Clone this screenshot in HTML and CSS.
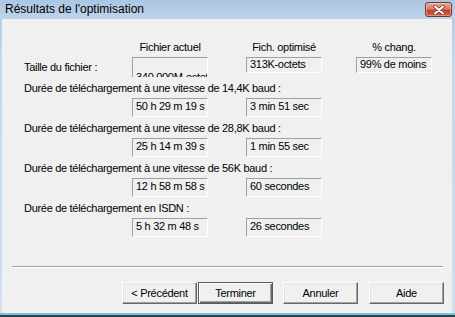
FILE: index.html
```html
<!DOCTYPE html>
<html lang="fr">
<head>
    <meta charset="UTF-8">
    <title>Résultats de l'optimisation</title>
    <link rel="stylesheet" href="styles.css">
</head>
<body>
    <div class="window">
        <div class="titlebar">
            <span class="title">Résultats de l'optimisation</span>
            <span class="close">
                <svg width="12" height="10" viewBox="0 0 12 10">
                    <path d="M2 1.5 L10 8.5 M10 1.5 L2 8.5" stroke="#7a3a30" stroke-width="3.6" stroke-linecap="round"/>
                    <path d="M2 1.5 L10 8.5 M10 1.5 L2 8.5" stroke="#ffffff" stroke-width="2" stroke-linecap="round"/>
                </svg>
            </span>
        </div>

        <div class="content">
            <div class="results">
                <div class="row head">
                    <div class="cell-label"></div>
                    <div class="c1">Fichier actuel</div>
                    <div class="c2">Fich. optimisé</div>
                    <div class="c3">% chang.</div>
                </div>

                <div class="row size">
                    <div class="cell-label">Taille du fichier :</div>
                    <div class="c1 box clipped">340 000M-octets</div>
                    <div class="c2 box short">313K-octets</div>
                    <div class="c3 box short">99% de moins</div>
                </div>

                <div class="group">
                    <div class="label">Durée de téléchargement à une vitesse de 14,4K baud :</div>
                    <div class="row">
                        <div class="cell-label"></div>
                        <div class="c1 box">50 h 29 m 19 s</div>
                        <div class="c2 box">3 min 51 sec</div>
                    </div>
                </div>

                <div class="group">
                    <div class="label">Durée de téléchargement à une vitesse de 28,8K baud :</div>
                    <div class="row">
                        <div class="cell-label"></div>
                        <div class="c1 box">25 h 14 m 39 s</div>
                        <div class="c2 box">1 min 55 sec</div>
                    </div>
                </div>

                <div class="group">
                    <div class="label">Durée de téléchargement à une vitesse de 56K baud :</div>
                    <div class="row">
                        <div class="cell-label"></div>
                        <div class="c1 box">12 h 58 m 58 s</div>
                        <div class="c2 box">60 secondes</div>
                    </div>
                </div>

                <div class="group">
                    <div class="label">Durée de téléchargement en ISDN :</div>
                    <div class="row">
                        <div class="cell-label"></div>
                        <div class="c1 box">5 h 32 m 48 s</div>
                        <div class="c2 box">26 secondes</div>
                    </div>
                </div>
            </div>

            <div class="separator"></div>

            <div class="buttons">
                <button class="btn">&lt; Précédent</button>
                <button class="btn default">Terminer</button>
                <button class="btn gap">Annuler</button>
                <button class="btn gap">Aide</button>
            </div>
        </div>

        <div class="bottom-edge"></div>
    </div>
</body>
</html>
```

FILE: styles.css
```css
html, body {
    margin: 0;
    padding: 0;
}

body {
    width: 455px;
    height: 317px;
    overflow: hidden;
    font-family: "Liberation Sans", Arial, sans-serif;
    font-size: 11px;
    letter-spacing: -0.3px;
    color: #000;
    background: #f0f0f0;
}

.window {
    width: 455px;
    height: 317px;
    display: flex;
    flex-direction: column;
    background: linear-gradient(to bottom, #aec7e3, #c4d7ed 60px, #cfdff0);
}

/* Title bar */
.titlebar {
    height: 19px;
    display: flex;
    align-items: center;
    justify-content: space-between;
    padding: 0 3px 0 5px;
    background: linear-gradient(to bottom, #abc5e2, #bfd4eb);
}

.title {
    font-size: 12px;
    letter-spacing: 0;
    line-height: 19px;
}

.close {
    width: 25px;
    height: 13px;
    border: 1px solid #6f3a33;
    border-radius: 3px;
    display: flex;
    align-items: center;
    justify-content: center;
    background: linear-gradient(to bottom, #e6a597, #d7806c 45%, #c2432b 55%, #cf5f42);
    box-shadow: inset 0 0 0 1px rgba(255, 255, 255, 0.35);
}

/* Dialog body */
.content {
    flex: 1;
    margin: 0 3px 0 2px;
    background: #f0f0f0;
    display: flex;
    flex-direction: column;
}

.results {
    padding: 22px 0 0 22px;
}

.row {
    display: flex;
    line-height: 13px;
}

.cell-label {
    width: 108px;
}

.c1 {
    width: 76px;
}

.c2 {
    width: 76px;
    margin-left: 38px;
}

.c3 {
    width: 76px;
    margin-left: 34px;
}

.head {
    height: 13px;
    margin-bottom: 3px;
}

.head div {
    text-align: center;
}

.size {
    height: 20px;
}

.size .cell-label {
    padding-top: 4px;
}

.box {
    box-sizing: border-box;
    height: 19px;
    padding: 1px 3px;
    white-space: nowrap;
    overflow: hidden;
    border: 1px solid;
    border-color: #a0a0a0 #ffffff #ffffff #a0a0a0;
}

.box.short {
    height: 16px;
    padding-top: 0;
}

.box.clipped {
    height: 20px;
    padding-top: 13px;
    border-bottom: none;
}

.group {
    margin-top: 5px;
}

.label {
    line-height: 13px;
    margin-bottom: 3px;
}

.separator {
    margin: 29px 0 0 10px;
    width: 431px;
    height: 1px;
    background: #a0a0a0;
    border-bottom: 1px solid #ffffff;
}

.buttons {
    display: flex;
    justify-content: flex-end;
    padding-right: 8px;
    margin-top: 14px;
    gap: 1px;
}

.btn {
    width: 75px;
    height: 22px;
    box-sizing: border-box;
    padding: 0;
    font-family: inherit;
    font-size: 11px;
    letter-spacing: -0.3px;
    color: #000;
    background: #f0f0f0;
    border: 1px solid;
    border-color: #ffffff #696969 #696969 #ffffff;
    box-shadow: inset -1px -1px 0 #a0a0a0, inset 1px 1px 0 #e3e3e3;
}

.btn.default {
    border-color: #5a5a5a;
    box-shadow: inset 1px 1px 0 #ffffff, inset -1px -1px 0 #696969, inset -2px -2px 0 #a0a0a0;
}

.btn.gap {
    margin-left: 9px;
}

.btn.gap + .btn.gap {
    margin-left: 10px;
}

.bottom-edge {
    height: 4px;
    background: linear-gradient(to bottom, #6cc6e6 0, #6cc6e6 2px, #3a3f44 2px);
}
```
